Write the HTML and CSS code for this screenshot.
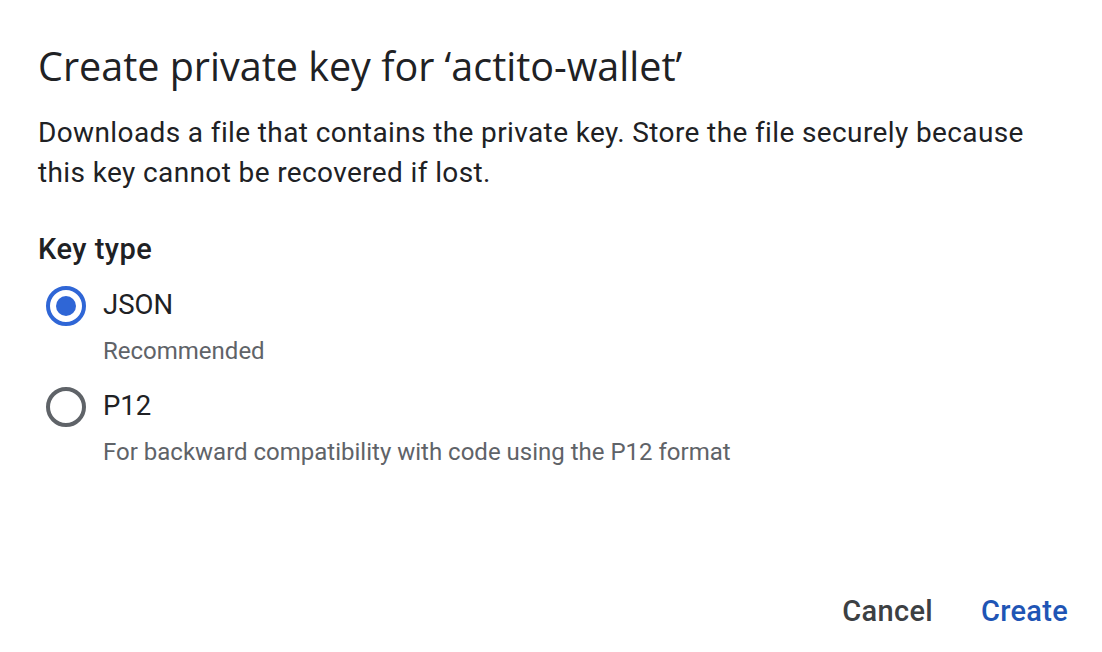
FILE: index.html
```html
<!DOCTYPE html>
<html>
<head>
<meta charset="utf-8">
<link rel="stylesheet" href="styles.css">
</head>
<body>
<div class="dialog">
  <h1 class="title">Create private key for ‘actito-wallet’</h1>
  <p class="desc">Downloads a file that contains the private key. Store the file securely because this key cannot be recovered if lost.</p>
  <div class="group">
    <div class="group-label">Key type</div>
    <label class="option">
      <span class="radio checked"><span class="dot"></span></span>
      <span class="opt-text">
        <span class="opt-label">JSON</span>
        <span class="opt-hint">Recommended</span>
      </span>
    </label>
    <label class="option">
      <span class="radio"></span>
      <span class="opt-text">
        <span class="opt-label">P12</span>
        <span class="opt-hint">For backward compatibility with code using the P12 format</span>
      </span>
    </label>
  </div>
  <div class="actions">
    <button class="btn cancel">Cancel</button>
    <button class="btn create">Create</button>
  </div>
</div>
</body>
</html>
```
FILE: styles.css
```css
html, body {
  margin: 0;
  padding: 0;
  background: #ffffff;
}
body {
  font-family: Roboto, "Liberation Sans", sans-serif;
  color: #202124;
}
.dialog {
  width: 1102px;
  height: 652px;
  box-sizing: border-box;
  padding: 40px 34px 0 38px;
  display: flex;
  flex-direction: column;
}
.title {
  margin: 0;
  font-family: "Open Sans", Roboto, sans-serif;
  font-weight: 400;
  font-size: 39.5px;
  line-height: 52px;
  color: #202124;
}
.desc {
  margin: 21px 0 0 0;
  font-size: 28px;
  line-height: 40px;
  letter-spacing: 0.38px;
  color: #202124;
  max-width: 1030px;
}
.group {
  margin-top: 38px;
  display: flex;
  flex-direction: column;
}
.group-label {
  font-family: Roboto, sans-serif;
  font-size: 29px;
  font-weight: 500;
  letter-spacing: 0.5px;
  line-height: 36px;
  color: #202124;
}
.option {
  display: flex;
  align-items: flex-start;
  margin-top: 18px;
}
.option + .option {
  margin-top: 19px;
}
.radio {
  width: 40px;
  height: 40px;
  box-sizing: border-box;
  border: 4px solid #5f6368;
  border-radius: 50%;
  margin: 1px 0 0 8px;
  display: flex;
  align-items: center;
  justify-content: center;
  flex: none;
}
.radio.checked {
  border-color: #2f66d6;
}
.dot {
  width: 20px;
  height: 20px;
  border-radius: 50%;
  background: #2f66d6;
}
.opt-text {
  display: flex;
  flex-direction: column;
  margin-left: 17px;
}
.opt-label {
  font-size: 27.5px;
  line-height: 40px;
  color: #202124;
}
.opt-hint {
  margin-top: 10px;
  font-size: 24px;
  line-height: 32px;
  color: #5f6368;
}
.actions {
  margin-top: auto;
  margin-bottom: 20px;
  display: flex;
  justify-content: flex-end;
  gap: 16px;
}
.btn {
  border: none;
  background: none;
  font-family: Roboto, sans-serif;
  font-size: 29px;
  font-weight: 500;
  letter-spacing: 0.3px;
  line-height: 42px;
  padding: 0 16px;
}
.cancel { color: #3c4043; }
.create { color: #1f55b5; padding-right: 0; }
```
